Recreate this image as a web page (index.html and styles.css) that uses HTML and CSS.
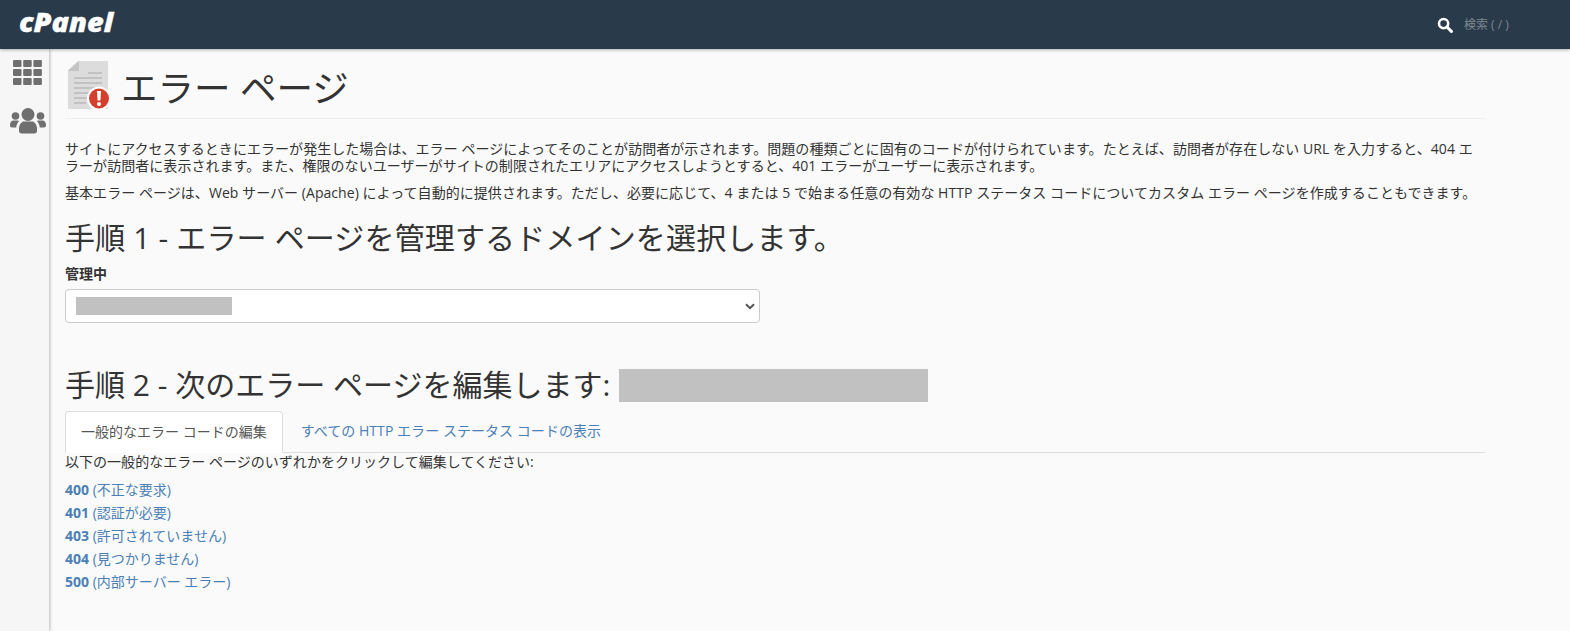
FILE: index.html
```html
<!DOCTYPE html>
<html lang="ja">
<head>
<meta charset="utf-8">
<title>エラー ページ</title>
<link rel="stylesheet" href="styles.css">
</head>
<body>
<header class="topbar">
  <div class="logo">cPanel</div>
  <div class="search">
    <svg class="search-icon" viewBox="0 0 16 16"><circle cx="6.6" cy="6.6" r="4.6" fill="none" stroke="#fff" stroke-width="2.6"/><path d="M10 10l4.400 4.400" stroke="#fff" stroke-width="3" stroke-linecap="round"/></svg>
    <span class="search-text">検索 ( / )</span>
  </div>
</header>
<div class="shell">
  <nav class="sidebar">
    <svg class="nav-grid" viewBox="0 0 29 25"><g fill="#6f6f6f"><rect x="0" y="0" width="8.500" height="7" rx="1"/><rect x="10.200" y="0" width="8.500" height="7" rx="1"/><rect x="20.400" y="0" width="8.500" height="7" rx="1"/><rect x="0" y="9" width="8.500" height="7" rx="1"/><rect x="10.200" y="9" width="8.500" height="7" rx="1"/><rect x="20.400" y="9" width="8.500" height="7" rx="1"/><rect x="0" y="18" width="8.500" height="7" rx="1"/><rect x="10.200" y="18" width="8.500" height="7" rx="1"/><rect x="20.400" y="18" width="8.500" height="7" rx="1"/></g></svg>
    <svg class="nav-users" viewBox="0 0 36 26"><g fill="#6f6f6f"><circle cx="18" cy="6.500" r="6.500"/><circle cx="5.500" cy="8" r="3.800"/><circle cx="30.500" cy="8" r="3.800"/><path d="M9 21c0-5 3-7.500 5-7.500h8c2 0 5 2.500 5 7.500v2c0 1.500-1 2.500-2.500 2.500h-13C10 25.500 9 24.500 9 23z"/><path d="M0 17c0-3 1.500-4.500 3.500-4.500h4c.6 0 1.200.2 1.700.5-1.700 1.500-2.700 3.500-3 6.500H2c-1.200 0-2-.8-2-2z"/><path d="M36 17c0-3-1.500-4.500-3.500-4.500h-4c-.6 0-1.200.2-1.700.5 1.700 1.500 2.700 3.500 3 6.500H34c1.200 0 2-.8 2-2z"/></g></svg>
  </nav>
  <main class="content">
    <div class="page-head">
      <svg class="page-icon" viewBox="0 0 44 50">
        <path d="M11 1H41V49H1V10z" fill="#dcdcdc"/>
        <path d="M1 11L12 1V11z" fill="#c4c4c4"/>
        <g fill="#c2c2c2"><rect x="21" y="12" width="14" height="2"/><rect x="7" y="17" width="28" height="2"/><rect x="7" y="22" width="28" height="2"/><rect x="7" y="27" width="28" height="2"/><rect x="7" y="32" width="18" height="2"/><rect x="7" y="37" width="14" height="2"/><rect x="7" y="42" width="12" height="2"/></g>
        <circle cx="32" cy="38.500" r="12" fill="#fff"/>
        <circle cx="32" cy="38.500" r="10" fill="#d43f2d"/>
        <path d="M30 31h4l-.6 9.500h-2.800z" fill="#fff"/>
        <circle cx="32" cy="44" r="2" fill="#fff"/>
      </svg>
      <h1 class="page-title">エラー ページ</h1>
    </div>
    <p class="para first">サイトにアクセスするときにエラーが発生した場合は、エラー ページによってそのことが訪問者が示されます。問題の種類ごとに固有のコードが付けられています。たとえば、訪問者が存在しない URL を入力すると、404 エラーが訪問者に表示されます。また、権限のないユーザーがサイトの制限されたエリアにアクセスしようとすると、401 エラーがユーザーに表示されます。</p>
    <p class="para">基本エラー ページは、Web サーバー (Apache) によって自動的に提供されます。ただし、必要に応じて、4 または 5 で始まる任意の有効な HTTP ステータス コードについてカスタム エラー ページを作成することもできます。</p>
    <h2 class="step step-one">手順 1 - エラー ページを管理するドメインを選択します。</h2>
    <label class="field-label">管理中</label>
    <div class="select-box">
      <span class="redact redact-small"></span>
      <svg class="chevron" viewBox="0 0 10 7"><path d="M1 1.200l4 4 4-4" fill="none" stroke="#555" stroke-width="2"/></svg>
    </div>
    <h2 class="step step-two">手順 2 - 次のエラー ページを編集します: <span class="redact redact-large"></span></h2>
    <div class="tabs">
      <a class="tab active">一般的なエラー コードの編集</a>
      <a class="tab link">すべての HTTP エラー ステータス コードの表示</a>
    </div>
    <p class="intro">以下の一般的なエラー ページのいずれかをクリックして編集してください:</p>
    <ul class="codes">
      <li><a><b>400</b> (不正な要求)</a></li>
      <li><a><b>401</b> (認証が必要)</a></li>
      <li><a><b>403</b> (許可されていません)</a></li>
      <li><a><b>404</b> (見つかりません)</a></li>
      <li><a><b>500</b> (内部サーバー エラー)</a></li>
    </ul>
  </main>
</div>
</body>
</html>
```
FILE: styles.css
```css
* { box-sizing: border-box; }
html, body { margin: 0; height: 100%; }
body {
  font-family: "Open Sans", "Noto Sans CJK JP", sans-serif;
  font-size: 14px;
  line-height: 20px;
  color: #333;
  background: #fafafa;
  overflow: hidden;
}
.topbar {
  height: 49px;
  background: #293a4a;
  display: flex;
  align-items: center;
  justify-content: space-between;
  box-shadow: 0 1px 3px rgba(0,0,0,.3);
  position: relative;
  z-index: 2;
}
.logo {
  margin: 0 0 6px 19px;
  color: #fff;
  font-family: "Open Sans", sans-serif;
  font-weight: 800;
  font-style: italic;
  font-size: 27px;
  line-height: 43px;
  -webkit-text-stroke: 0.4px #fff;
  transform: scaleX(1.07);
  transform-origin: left center;
}
.search { display: flex; align-items: center; width: 133px; }
.search-icon { width: 16px; height: 16px; margin-right: 11px; }
.search-text { font-size: 12px; color: #7f8890; }
.shell { display: flex; height: 582px; }
.sidebar {
  width: 49px;
  flex: none;
  background: #f6f6f6;
  box-shadow: 1px 0 3px rgba(0,0,0,.25);
  display: flex;
  flex-direction: column;
  align-items: center;
  padding: 11px 0 0 6px;
}
.nav-grid { width: 29px; height: 25px; }
.nav-users { width: 36px; height: 26px; margin-top: 23px; }
.content { width: 1420px; margin-left: 16px; }
.page-head {
  display: flex;
  align-items: center;
  height: 70px;
  border-bottom: 1px solid #eee;
  padding: 8px 0 0 2px;
}
.page-icon { width: 44px; height: 50px; margin: 0 10px 5px 0; }
.page-title { margin: 1px 0 0; font-size: 36.500px; font-weight: 400; line-height: 48px; color: #333; }
.para { margin: 0 0 10px; line-height: 17px; letter-spacing: 0.05px; }
.para.first { margin-top: 21px; }
.step { font-weight: 400; color: #333; margin: 0; }
.step-one { font-size: 30px; line-height: 40px; margin-top: 17px; letter-spacing: 0.15px; }
.field-label { display: block; font-weight: 700; margin-top: 6px; }
.select-box {
  width: 695px;
  height: 34px;
  margin-top: 5px;
  background: #fff;
  border: 1px solid #ccc;
  border-radius: 4px;
  display: flex;
  align-items: center;
  justify-content: space-between;
  padding: 0 4px 0 10px;
}
.redact { display: inline-block; background: #c1c1c1; }
.redact-small { width: 156px; height: 18px; }
.chevron { width: 10px; height: 7px; }
.step-two { font-size: 30px; line-height: 34px; margin-top: 45px; display: flex; align-items: center; }
.redact-large { width: 309px; height: 33px; margin-left: 9px; }
.tabs { display: flex; margin-top: 9px; height: 42px; border-bottom: 1px solid #ddd; }
.tab { padding: 10px 15px; color: #4a80b5; height: 42px; margin-right: 3px; }
.tab.link { letter-spacing: 0.05px; }
.tab.active {
  color: #555;
  background: #fff;
  border: 1px solid #ddd;
  border-bottom-color: #fff;
  border-radius: 4px 4px 0 0;
}
.intro { margin: -1px 0 6px; letter-spacing: 0.03px; }
.codes { list-style: none; margin: 0; padding: 0; }
.codes li { height: 23px; line-height: 23px; }
.codes a { color: #4a80b5; }
```
